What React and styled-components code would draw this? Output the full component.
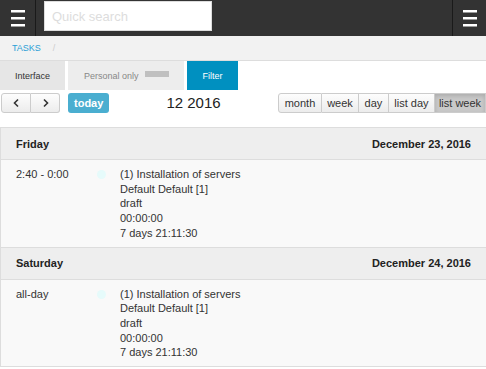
import React from "react";
import styled, { createGlobalStyle } from "styled-components";

const Global = createGlobalStyle`
  html, body { margin: 0; padding: 0; background: #fff; }
  body { font-family: "Liberation Sans", Arial, sans-serif; color: #333; width: 486px; overflow: hidden; }
  * { box-sizing: border-box; }
`;

const TopBar = styled.div`
  height: 36px;
  background: #333;
  display: flex;
  align-items: flex-start;
`;

const MenuBox = styled.div`
  width: ${p => p.w}px;
  height: 36px;
  display: flex;
  flex-direction: column;
  justify-content: center;
  align-items: center;
  gap: 5px;
  border-${p => p.side}: 1px solid #1a1a1a;
`;

const Bar = styled.span`
  display: block;
  width: 14px;
  height: 2px;
  background: #fff;
  box-shadow: 0 1px 0 #999;
`;

const Search = styled.input`
  margin: 1px 0 0 8px;
  width: 168px;
  height: 30px;
  border: 1px solid #ddd;
  background: #fff;
  padding: 0 7px;
  font-family: "Liberation Sans", Arial, sans-serif;
  font-size: 13px;
  &::placeholder { color: #ddd; }
`;

const Spacer = styled.div`
  flex: 1;
`;

const Crumbs = styled.div`
  height: 25px;
  background: #f2f2f2;
  border-bottom: 1px solid #ddd;
  display: flex;
  align-items: center;
  padding-left: 12px;
  font-size: 9px;
  gap: 12px;
`;

const CrumbLink = styled.span`
  color: #2a9fd6;
  text-transform: uppercase;
`;

const CrumbSep = styled.span`
  color: #ccc;
`;

const Tabs = styled.div`
  display: flex;
  height: 29px;
  gap: 3px;
`;

const Tab = styled.div`
  width: ${p => p.w}px;
  background: ${p => p.bg};
  color: ${p => p.fg};
  font-size: 9px;
  display: flex;
  align-items: center;
  justify-content: ${p => (p.left ? "flex-start" : "center")};
  padding-left: ${p => (p.left ? "16px" : "0")};
  gap: 6px;
`;

const Toggle = styled.span`
  width: 24px;
  height: 6px;
  background: #c0c0c0;
  margin-top: -4px;
`;

const Toolbar = styled.div`
  display: flex;
  justify-content: space-between;
  align-items: center;
  padding: 2px 0 0 1px;
  height: 23px;
  margin-bottom: 14px;
`;

const Group = styled.div`
  display: flex;
  align-items: center;
  gap: 8px;
`;

const Btn = styled.button`
  height: 20px;
  padding: 0;
  white-space: nowrap;
  font-family: "Liberation Sans", Arial, sans-serif;
  font-size: 11px;
  color: #333;
  border: 1px solid #ccc;
  border-left-width: ${p => (p.joined ? 0 : 1)}px;
  background: ${p => (p.active ? "#c9c9c9" : "linear-gradient(#fdfdfd, #ececec)")};
  box-shadow: ${p => (p.active ? "inset 0 2px 4px rgba(0,0,0,.15)" : "none")};
  border-radius: ${p => p.radius || "0"};
  display: flex;
  align-items: center;
  justify-content: center;
  width: ${p => p.w}px;
`;

const Today = styled.button`
  height: 20px;
  width: 41px;
  border: none;
  border-radius: 3px;
  background: #4aaed0;
  color: #fff;
  font-family: "Liberation Sans", Arial, sans-serif;
  font-size: 11px;
  font-weight: bold;
`;

const Title = styled.h2`
  margin: 0;
  font-size: 15px;
  font-weight: normal;
  color: #222;
`;

const Buttons = styled.div`
  display: flex;
`;

const List = styled.div`
  border-top: 1px solid #ddd;
  border-left: 1px solid #ddd;
`;

const DayHead = styled.div`
  height: 32px;
  background: #eee;
  border-bottom: 1px solid #ddd;
  display: flex;
  justify-content: space-between;
  align-items: center;
  padding: 0 15px;
  font-size: 11px;
  font-weight: bold;
  color: #222;
`;

const EventRow = styled.div`
  background: #f9f9f9;
  border-bottom: 1px solid #ddd;
  display: grid;
  grid-template-columns: 81px 23px 1fr;
  padding: 7px 15px 6px 15px;
  font-size: 11px;
  line-height: 14.7px;
  color: #333;
`;

const Dot = styled.span`
  display: block;
  width: 9px;
  height: 9px;
  border-radius: 50%;
  background: #e6fbfb;
  margin-top: 3px;
`;

const Lines = styled.div`
  display: flex;
  flex-direction: column;
`;

const Chev = ({ d }) => (
  <svg width="9" height="10" viewBox="0 0 9 10">
    <path d={d} fill="none" stroke="#333" strokeWidth="1.6" />
  </svg>
);

const days = [
  { name: "Friday", date: "December 23, 2016", time: "2:40 - 0:00" },
  { name: "Saturday", date: "December 24, 2016", time: "all-day" },
];

const views = [
  { label: "month", w: 44 },
  { label: "week", w: 37 },
  { label: "day", w: 30 },
  { label: "list day", w: 46 },
  { label: "list week", w: 51, active: true },
];

export default function App() {
  return (
    <>
      <Global />
      <TopBar>
        <MenuBox w={36} side="right">
          <Bar />
          <Bar />
          <Bar />
        </MenuBox>
        <Search placeholder="Quick search" />
        <Spacer />
        <MenuBox w={34} side="left">
          <Bar />
          <Bar />
          <Bar />
        </MenuBox>
      </TopBar>
      <Crumbs>
        <CrumbLink>Tasks</CrumbLink>
        <CrumbSep>/</CrumbSep>
      </Crumbs>
      <Tabs>
        <Tab w={65} bg="#e6e6e6" fg="#333">Interface</Tab>
        <Tab w={116} bg="#ededed" fg="#888" left>
          Personal only <Toggle />
        </Tab>
        <Tab w={51} bg="#0090c0" fg="#fff">Filter</Tab>
      </Tabs>
      <Toolbar>
        <Group>
          <Buttons>
            <Btn w={30} radius="3px 0 0 3px"><Chev d="M6 1.5 L2.5 5 L6 8.5" /></Btn>
            <Btn w={29} joined radius="0 3px 3px 0"><Chev d="M3 1.5 L6.5 5 L3 8.5" /></Btn>
          </Buttons>
          <Today>today</Today>
        </Group>
        <Title>12 2016</Title>
        <Buttons>
          {views.map((v, i) => (
            <Btn
              key={v.label}
              w={v.w}
              joined={i > 0}
              active={v.active}
              radius={i === 0 ? "3px 0 0 3px" : "0"}
            >
              {v.label}
            </Btn>
          ))}
        </Buttons>
      </Toolbar>
      <List>
        {days.map(d => (
          <React.Fragment key={d.name}>
            <DayHead>
              <span>{d.name}</span>
              <span>{d.date}</span>
            </DayHead>
            <EventRow>
              <span>{d.time}</span>
              <span><Dot /></span>
              <Lines>
                <span>(1) Installation of servers</span>
                <span>Default Default [1]</span>
                <span>draft</span>
                <span>00:00:00</span>
                <span>7 days 21:11:30</span>
              </Lines>
            </EventRow>
          </React.Fragment>
        ))}
      </List>
    </>
  );
}
